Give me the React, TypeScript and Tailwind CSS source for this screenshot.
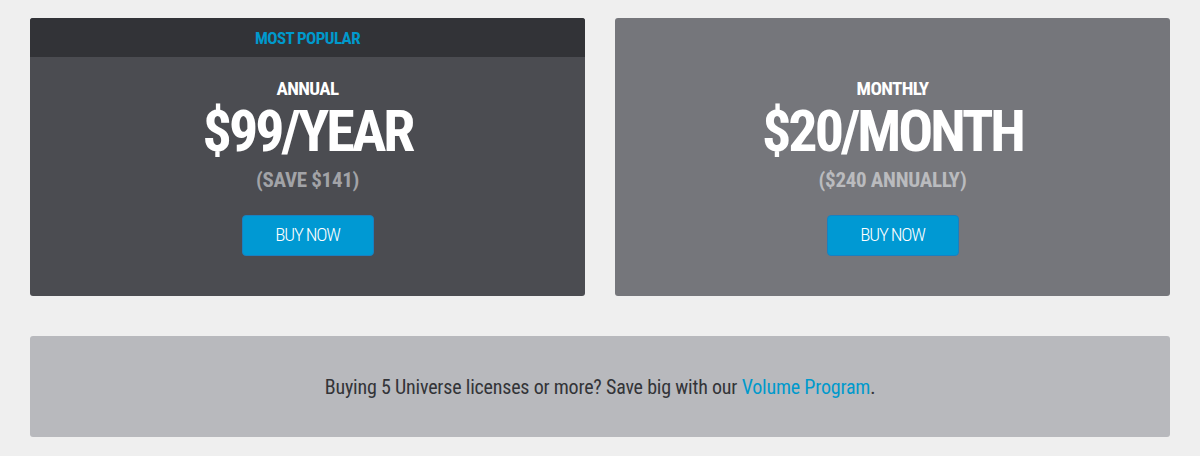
import React from "react";

const font = "font-['Roboto_Condensed','Liberation_Sans_Narrow','DejaVu_Sans_Condensed',sans-serif]";

type Plan = {
  name: string;
  price: string;
  note: string;
  popular?: boolean;
};

const plans: Plan[] = [
  { name: "ANNUAL", price: "$99/YEAR", note: "(SAVE $141)", popular: true },
  { name: "MONTHLY", price: "$20/MONTH", note: "($240 ANNUALLY)" },
];

function PlanCard({ plan }: { plan: Plan }) {
  return (
    <div
      className={`flex flex-col h-[278px] rounded-[3px] overflow-hidden ${
        plan.popular ? "bg-[#4b4c51]" : "bg-[#75767b]"
      }`}
    >
      {plan.popular ? (
        <div className="h-[39px] bg-[#323337] flex items-center justify-center">
          <span className="text-[17px] leading-[20px] font-bold text-[#0099cc] tracking-[-0.6px]">
            MOST POPULAR
          </span>
        </div>
      ) : (
        <div className="h-[39px]" />
      )}
      <div className="flex flex-col items-center pt-[24px]">
        <div className="text-[19px] leading-[16px] font-bold text-white tracking-[-0.6px]">
          {plan.name}
        </div>
        <div className="mt-[12px] text-[58px] leading-[44px] font-bold text-white tracking-[-3px]">
          {plan.price}
        </div>
        <div
          className={`mt-[19px] text-[21px] leading-[16px] font-bold tracking-[-0.3px] ${
            plan.popular ? "text-[#a2a3a7]" : "text-[#babbbe]"
          }`}
        >
          {plan.note}
        </div>
        <button className="mt-[27px] w-[132px] h-[41px] rounded-[4px] bg-[#0099d3] border border-[#1a80c0] flex items-center justify-center text-white text-[19px] font-light tracking-[-1.2px]">
          BUY NOW
        </button>
      </div>
    </div>
  );
}

export default function App() {
  return (
    <div className={`min-h-[456px] bg-[#efefef] px-[30px] pt-[18px] ${font}`}>
      <div className="grid grid-cols-2 gap-[30px]">
        {plans.map((p) => (
          <PlanCard key={p.name} plan={p} />
        ))}
      </div>
      <div className="mt-[40px] h-[101px] rounded-[3px] bg-[#b8b9bd] flex items-center justify-center">
        <p className="text-[20px] text-[#333438] tracking-[-0.2px]">
          Buying 5 Universe licenses or more? Save big with our{" "}
          <a href="#" className="text-[#0099cc]">
            Volume Program
          </a>
          .
        </p>
      </div>
    </div>
  );
}
